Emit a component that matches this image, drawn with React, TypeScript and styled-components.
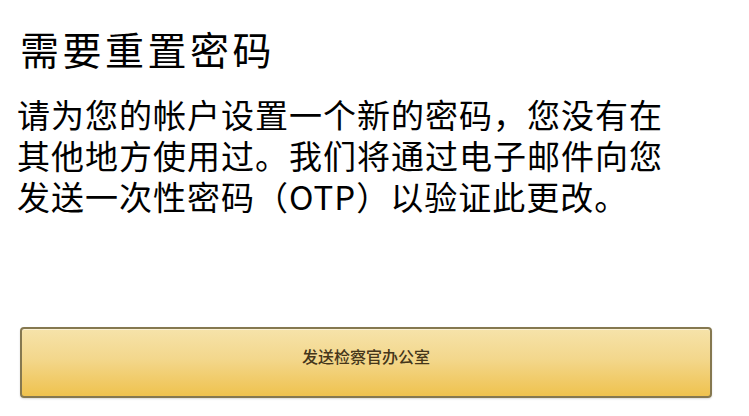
import * as React from 'react';
import styled, { createGlobalStyle } from 'styled-components';

const GlobalStyle = createGlobalStyle`
  html, body {
    margin: 0;
    padding: 0;
    background: #ffffff;
  }
  body {
    font-family: 'Noto Sans CJK SC', 'Noto Sans', sans-serif;
    color: #000;
  }
`;

const Page = styled.main`
  width: 749px;
  height: 416px;
  box-sizing: border-box;
  padding: 29px 0 0 19px;
  display: flex;
  flex-direction: column;
  overflow: hidden;
`;

const Title = styled.h1`
  margin: 0 0 0 1px;
  font-size: 39px;
  line-height: 39px;
  font-weight: 400;
  letter-spacing: 3.5px;
`;

const Message = styled.p`
  margin: 26px 0 0 -2px;
  width: 665px;
  font-size: 33px;
  line-height: 41px;
  letter-spacing: 1px;
  font-weight: 400;
`;

const SendButton = styled.button`
  margin-top: auto;
  margin-bottom: 18px;
  margin-left: 1px;
  width: 692px;
  height: 71px;
  box-sizing: border-box;
  padding: 0 0 14px;
  border: 2px solid #857850;
  border-radius: 4px;
  background: linear-gradient(to bottom, #f6e3aa 0%, #f3d78c 45%, #efc24e 100%);
  box-shadow: inset 0 1px 0 rgba(255, 255, 255, 0.5), 0 1px 2px rgba(0, 0, 0, 0.15);
  font-family: 'Noto Sans CJK SC', sans-serif;
  font-size: 16px;
  font-weight: 500;
  color: #45361a;
  cursor: pointer;
`;

export default function App() {
  return (
    <>
      <GlobalStyle />
      <Page>
        <Title>需要重置密码</Title>
        <Message>
          请为您的帐户设置一个新的密码，您没有在其他地方使用过。我们将通过电子邮件向您发送一次性密码（OTP）以验证此更改。
        </Message>
        <SendButton>发送检察官办公室</SendButton>
      </Page>
    </>
  );
}
